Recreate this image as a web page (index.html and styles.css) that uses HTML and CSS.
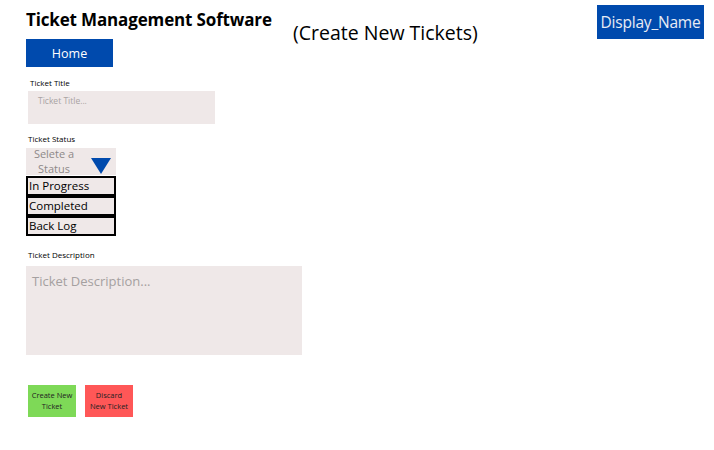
FILE: index.html
```html
<!DOCTYPE html>
<html>
<head>
<meta charset="utf-8">
<link rel="stylesheet" href="styles.css">
</head>
<body>
<div class="page">
  <header class="top">
    <div class="brand">
      <h1 class="title">Ticket Management Software</h1>
      <button class="home">Home</button>
    </div>
    <div class="subtitle">(Create New Tickets)</div>
    <div class="user">Display_Name</div>
  </header>

  <section class="form">
    <label class="label l-title">Ticket Title</label>
    <div class="input title-input">Ticket Title...</div>

    <label class="label l-status">Ticket Status</label>
    <div class="select">
      <span class="select-text">Selete a<br>Status</span>
      <svg class="arrow" width="20" height="16" viewBox="0 0 20 16"><polygon points="0,0 20,0 10,16" fill="#004aad"/></svg>
    </div>
    <div class="options">
      <div class="option">In Progress</div>
      <div class="option">Completed</div>
      <div class="option">Back Log</div>
    </div>

    <label class="label l-desc">Ticket Description</label>
    <div class="input desc-input">Ticket Description...</div>

    <div class="actions">
      <button class="btn create">Create New<br>Ticket</button>
      <button class="btn discard">Discard<br>New Ticket</button>
    </div>
  </section>
</div>
</body>
</html>
```

FILE: styles.css
```css
* { box-sizing: border-box; }
html, body { margin: 0; padding: 0; background: #fff; }
body { font-family: "Open Sans", "Noto Sans", sans-serif; color: #000; width: 714px; height: 450px; overflow: hidden; }
.page { padding: 5px 10px 0 26px; }
.top { display: flex; align-items: flex-start; }
.brand { display: flex; flex-direction: column; width: 267px; }
.title { margin: 3px 0 0 0; font-size: 17px; font-weight: 700; line-height: 24px; white-space: nowrap; letter-spacing: -0.15px; }
.home { margin-top: 7px; width: 87px; height: 28px; border: none; background: #004aad; color: #fff; font-family: "Open Sans", sans-serif; font-size: 12.5px; padding: 0; }
.subtitle { margin-top: 15px; font-size: 19.5px; line-height: 26px; white-space: nowrap; }
.user { margin-left: auto; background: #004aad; color: #e8ecf4; font-size: 15.5px; height: 34px; width: 107px; display: flex; align-items: center; justify-content: center; white-space: nowrap; letter-spacing: -0.2px; }

.form { display: flex; flex-direction: column; align-items: flex-start; }
.label { font-size: 8px; line-height: 11px; display: block; }
.l-title { margin: 10px 0 0 4px; }
.input { background: #efe8e8; color: #a9a3a3; }
.title-input { margin: 3px 0 0 2px; width: 187px; height: 33px; font-size: 8.5px; padding: 4px 10px; }
.l-status { margin: 9px 0 0 2px; }
.select { margin-top: 4px; width: 90px; height: 27px; background: #efe8e8; display: flex; align-items: center; }
.select-text { color: #8e8888; font-size: 11px; line-height: 15px; text-align: center; width: 56px; margin-top: -2px; }
.arrow { margin-left: 9px; margin-top: 8px; }
.options { margin-top: 1px; display: flex; flex-direction: column; gap: 0; }
.option { width: 90px; height: 20px; border: 2px solid #000; background: #efe8e8; font-size: 11.5px; line-height: 15px; padding-left: 1px; white-space: nowrap; }
.l-desc { margin: 13px 0 0 2px; }
.desc-input { margin-top: 6px; width: 276px; height: 89px; font-size: 13px; padding: 6px 6px; color: #a5a0a0; }
.actions { display: flex; gap: 9px; margin: 30px 0 0 2px; }
.btn { width: 48px; height: 32px; border: none; padding: 0; font-family: "Open Sans", sans-serif; font-size: 7.5px; line-height: 11px; color: #222; }
.create { background: #7ed957; }
.discard { background: #ff5757; }
```
